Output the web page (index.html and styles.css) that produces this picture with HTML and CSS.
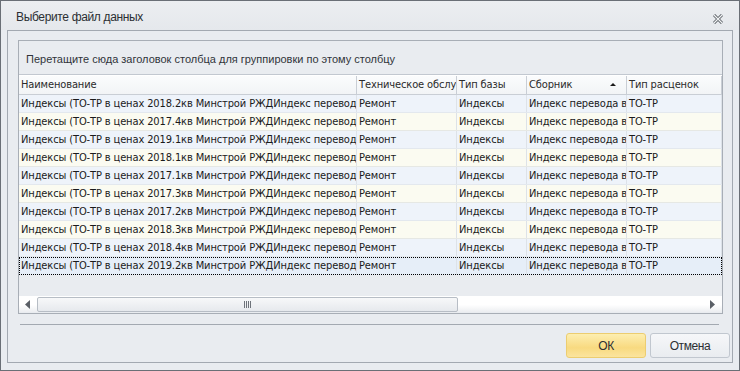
FILE: index.html
```html
<!DOCTYPE html>
<html lang="ru">
<head>
<meta charset="utf-8">
<title>Выберите файл данных</title>
<link rel="stylesheet" href="styles.css">
</head>
<body>
<div class="window">
  <div class="titlebar">
    <span class="title">Выберите файл данных</span>
    <svg class="close" width="10" height="10" viewBox="0 0 10 10">
      <path d="M1 1 L9 9 M9 1 L1 9" stroke="#555a60" stroke-width="3" fill="none"/>
      <path d="M1 1 L9 9 M9 1 L1 9" stroke="#f2f4f6" stroke-width="1.2" fill="none"/>
    </svg>
  </div>
  <div class="frame">
    <div class="grid">
      <div class="grouppanel"><span class="grouptext">Перетащите сюда заголовок столбца для группировки по этому столбцу</span></div>
      <div class="row header">
        <div class="cell">Наименование</div>
        <div class="cell">Техническое обслуживание</div>
        <div class="cell">Тип базы</div>
        <div class="cell sorted">Сборник<span class="sort"></span></div>
        <div class="cell">Тип расценок</div>
      </div>
      <div class="rows">
        <div class="row odd"><div class="cell">Индексы (ТО-ТР в ценах 2018.2кв Минстрой РЖДИндекс перевода в цены</div><div class="cell">Ремонт</div><div class="cell">Индексы</div><div class="cell">Индекс перевода в цены</div><div class="cell">ТО-ТР</div></div>
        <div class="row even"><div class="cell">Индексы (ТО-ТР в ценах 2017.4кв Минстрой РЖДИндекс перевода в цены</div><div class="cell">Ремонт</div><div class="cell">Индексы</div><div class="cell">Индекс перевода в цены</div><div class="cell">ТО-ТР</div></div>
        <div class="row odd"><div class="cell">Индексы (ТО-ТР в ценах 2019.1кв Минстрой РЖДИндекс перевода в цены</div><div class="cell">Ремонт</div><div class="cell">Индексы</div><div class="cell">Индекс перевода в цены</div><div class="cell">ТО-ТР</div></div>
        <div class="row even"><div class="cell">Индексы (ТО-ТР в ценах 2018.1кв Минстрой РЖДИндекс перевода в цены</div><div class="cell">Ремонт</div><div class="cell">Индексы</div><div class="cell">Индекс перевода в цены</div><div class="cell">ТО-ТР</div></div>
        <div class="row odd"><div class="cell">Индексы (ТО-ТР в ценах 2017.1кв Минстрой РЖДИндекс перевода в цены</div><div class="cell">Ремонт</div><div class="cell">Индексы</div><div class="cell">Индекс перевода в цены</div><div class="cell">ТО-ТР</div></div>
        <div class="row even"><div class="cell">Индексы (ТО-ТР в ценах 2017.3кв Минстрой РЖДИндекс перевода в цены</div><div class="cell">Ремонт</div><div class="cell">Индексы</div><div class="cell">Индекс перевода в цены</div><div class="cell">ТО-ТР</div></div>
        <div class="row odd"><div class="cell">Индексы (ТО-ТР в ценах 2017.2кв Минстрой РЖДИндекс перевода в цены</div><div class="cell">Ремонт</div><div class="cell">Индексы</div><div class="cell">Индекс перевода в цены</div><div class="cell">ТО-ТР</div></div>
        <div class="row even"><div class="cell">Индексы (ТО-ТР в ценах 2018.3кв Минстрой РЖДИндекс перевода в цены</div><div class="cell">Ремонт</div><div class="cell">Индексы</div><div class="cell">Индекс перевода в цены</div><div class="cell">ТО-ТР</div></div>
        <div class="row odd"><div class="cell">Индексы (ТО-ТР в ценах 2018.4кв Минстрой РЖДИндекс перевода в цены</div><div class="cell">Ремонт</div><div class="cell">Индексы</div><div class="cell">Индекс перевода в цены</div><div class="cell">ТО-ТР</div></div>
        <div class="row selected"><div class="cell">Индексы (ТО-ТР в ценах 2019.2кв Минстрой РЖДИндекс перевода в цены</div><div class="cell">Ремонт</div><div class="cell">Индексы</div><div class="cell">Индекс перевода в цены</div><div class="cell">ТО-ТР</div></div>
      </div>
      <div class="hscroll">
        <svg class="arrow" width="6" height="9" viewBox="0 0 6 9"><path d="M5 0 L5 9 L0 4.5 Z" fill="#5a5f66"/></svg>
        <div class="track">
          <div class="thumb"><span class="grip"></span></div>
        </div>
        <svg class="arrow" width="6" height="9" viewBox="0 0 6 9"><path d="M0 0 L0 9 L5 4.5 Z" fill="#5a5f66"/></svg>
      </div>
    </div>
    <div class="separator"></div>
    <div class="buttons">
      <button class="btn ok">ОК</button>
      <button class="btn cancel">Отмена</button>
    </div>
  </div>
</div>
</body>
</html>
```
FILE: styles.css
```css
html, body {
  margin: 0;
  padding: 0;
  background: #e9ecf0;
}
.window {
  width: 740px;
  height: 371px;
  box-sizing: border-box;
  border: 1px solid #6a6f76;
  background: #e9ecf0;
  display: flex;
  flex-direction: column;
  font-family: "DejaVu Sans Condensed", "Liberation Sans", sans-serif;
}
.titlebar {
  height: 29px;
  flex: none;
  display: flex;
  align-items: center;
  justify-content: space-between;
  padding: 0 16px 0 15px;
  background: linear-gradient(#eceef1, #e5e8ec);
}
.title {
  font-family: "Liberation Sans", sans-serif;
  font-size: 12px;
  letter-spacing: -0.35px;
  color: #2b2f33;
  padding-top: 2px;
}
.close {
  display: block;
  margin-top: 6px;
}
.frame {
  flex: 1;
  margin: 0 6px 7px 6px;
  border: 1px solid #a3a9b1;
  display: flex;
  flex-direction: column;
  padding: 9px 9px 0 10px;
}
.grid {
  height: 274px;
  box-sizing: border-box;
  border: 1px solid #a8aeb6;
  display: flex;
  flex-direction: column;
  background: #e9ecf0;
  overflow: hidden;
}
.grouppanel {
  height: 34px;
  flex: none;
  border-bottom: 1px solid #c2c8d0;
  display: flex;
  align-items: center;
  padding-left: 7px;
  padding-top: 2px;
  box-sizing: border-box;
}
.grouptext {
  font-family: "Liberation Sans", sans-serif;
  font-size: 11px;
  color: #30343a;
  white-space: nowrap;
}
.row {
  display: grid;
  grid-template-columns: 338px 100px 70px 100px 1fr;
  height: 18px;
  box-sizing: border-box;
  font-family: "DejaVu Sans Condensed", sans-serif;
  font-size: 11px;
  letter-spacing: -0.12px;
  color: #1a1a1a;
}
.cell {
  white-space: nowrap;
  overflow: hidden;
  padding-left: 2px;
  line-height: 17px;
  border-right: 1px solid #dde2e8;
}
.header {
  height: 20px;
  background: linear-gradient(#fbfcfd, #f2f4f6);
  border-bottom: 1px solid #c9ced5;
  border-top: 1px solid #ffffff;
}
.header .cell {
  border-right: 1px solid #c9ced5;
  line-height: 18px;
  color: #2a2a2a;
  position: relative;
}
.sort {
  position: absolute;
  right: 10px;
  top: 7px;
  width: 0;
  height: 0;
  border-left: 3px solid transparent;
  border-right: 3px solid transparent;
  border-bottom: 3px solid #1a1a1a;
}
.rows {
  flex: 1;
}
.odd {
  background: #eef3fa;
  border-bottom: 1px solid #e3e8ee;
}
.even {
  background: #fbfbf1;
  border-bottom: 1px solid #e6e8e4;
}
.selected {
  background: #e6eef8;
  outline: 1px dotted #000;
  outline-offset: -1px;
}
.selected .cell {
  line-height: 18px;
}
.hscroll {
  height: 16px;
  flex: none;
  display: flex;
  align-items: center;
  background: linear-gradient(#ffffff 55%, #eceef1);
  margin-bottom: 1px;
}
.hscroll .arrow {
  flex: none;
  margin: 0 6px;
}
.track {
  flex: 1;
  height: 15px;
  display: flex;
}
.thumb {
  width: 421px;
  box-sizing: border-box;
  border: 1px solid #b7bdc5;
  border-radius: 2px;
  background: linear-gradient(#f7f8f9, #e6e9ed);
  display: flex;
  align-items: center;
  justify-content: center;
}
.grip {
  width: 7px;
  height: 7px;
  background: repeating-linear-gradient(90deg, #6e737a 0 1px, transparent 1px 2px);
}
.separator {
  height: 1px;
  background: #a3a9b1;
  margin: 10px 4px 0 2px;
}
.buttons {
  display: flex;
  justify-content: flex-end;
  gap: 4px;
  margin-top: 8px;
  margin-right: -7px;
}
.btn {
  width: 80px;
  height: 25px;
  box-sizing: border-box;
  border-radius: 3px;
  font-family: "Liberation Sans", sans-serif;
  font-size: 12px;
  letter-spacing: -0.4px;
  color: #2b2f33;
  padding: 0;
}
.ok {
  border: 1px solid #eccd70;
  background: linear-gradient(#fdeeb0, #f8da80 60%, #fbe49e);
}
.cancel {
  border: 1px solid #c1c7cf;
  background: linear-gradient(#f6f7f9, #e9ecf0);
}
```
